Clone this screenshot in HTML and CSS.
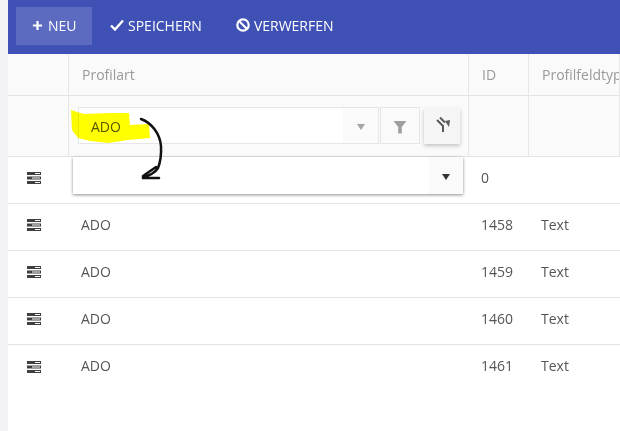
FILE: index.html
```html
<!DOCTYPE html>
<html lang="de">
<head>
<meta charset="utf-8">
<title>Profilfelder</title>
<link rel="stylesheet" href="styles.css">
</head>
<body>
<main class="page">
  <div class="toolbar">
    <button class="tool tool-active"><svg class="ti" viewBox="0 0 12 12"><path d="M6 1v10M1 6h10" stroke="#fff" stroke-width="2.4" fill="none"/></svg>NEU</button>
    <button class="tool"><svg class="ti ti-check" viewBox="0 0 14 12"><path d="M1 6.5l4 4 8-9" stroke="#fff" stroke-width="2.4" fill="none"/></svg>SPEICHERN</button>
    <button class="tool"><svg class="ti ti-ban" viewBox="0 0 14 14"><circle cx="7" cy="7" r="5.7" stroke="#fff" stroke-width="2.2" fill="none"/><path d="M3 3l8 8" stroke="#fff" stroke-width="2.2"/></svg>VERWERFEN</button>
  </div>
  <div class="grid">
    <div class="row head">
      <div class="c c1"></div><div class="c c2">Profilart</div><div class="c c3">ID</div><div class="c c4">Profilfeldtyp</div>
    </div>
    <div class="row filter">
      <div class="c c1"></div>
      <div class="c c2 filter-cell">
        <div class="combo"><span class="combo-text">ADO</span><span class="combo-arrow"><i class="tri tri-grey"></i></span></div>
        <span class="fbtn"><svg class="fi" viewBox="0 0 14 14"><path d="M0.5 1h13L8.8 7v6.5H5.2V7z" fill="#a0a0a0"/></svg></span>
        <span class="clear"><svg class="ci" viewBox="0 0 16 16"><path d="M2 3l6 6v6M5 .5l5 5" stroke="#5a5a5a" stroke-width="2" fill="none"/><path d="M10 4l5-1-1 7z" fill="#5a5a5a"/></svg></span>
      </div>
      <div class="c c3"></div><div class="c c4"></div>
    </div>
    <div class="row"><div class="c c1"><svg class="ri" viewBox="0 0 14 12"><path d="M0 0h14v3H0zM0 4.500h14v3H0zM0 9h14v3H0z" fill="#3f3f3f"/><path d="M8 1h5v1H8zM5 5.500h8v1H5zM8 10h5v1H8z" fill="#fff"/></svg></div><div class="c c2"></div><div class="c c3">0</div><div class="c c4"></div></div>
    <div class="row"><div class="c c1"><svg class="ri" viewBox="0 0 14 12"><path d="M0 0h14v3H0zM0 4.500h14v3H0zM0 9h14v3H0z" fill="#3f3f3f"/><path d="M8 1h5v1H8zM5 5.500h8v1H5zM8 10h5v1H8z" fill="#fff"/></svg></div><div class="c c2">ADO</div><div class="c c3">1458</div><div class="c c4">Text</div></div>
    <div class="row"><div class="c c1"><svg class="ri" viewBox="0 0 14 12"><path d="M0 0h14v3H0zM0 4.500h14v3H0zM0 9h14v3H0z" fill="#3f3f3f"/><path d="M8 1h5v1H8zM5 5.500h8v1H5zM8 10h5v1H8z" fill="#fff"/></svg></div><div class="c c2">ADO</div><div class="c c3">1459</div><div class="c c4">Text</div></div>
    <div class="row"><div class="c c1"><svg class="ri" viewBox="0 0 14 12"><path d="M0 0h14v3H0zM0 4.500h14v3H0zM0 9h14v3H0z" fill="#3f3f3f"/><path d="M8 1h5v1H8zM5 5.500h8v1H5zM8 10h5v1H8z" fill="#fff"/></svg></div><div class="c c2">ADO</div><div class="c c3">1460</div><div class="c c4">Text</div></div>
    <div class="row last"><div class="c c1"><svg class="ri" viewBox="0 0 14 12"><path d="M0 0h14v3H0zM0 4.500h14v3H0zM0 9h14v3H0z" fill="#3f3f3f"/><path d="M8 1h5v1H8zM5 5.500h8v1H5zM8 10h5v1H8z" fill="#fff"/></svg></div><div class="c c2">ADO</div><div class="c c3">1461</div><div class="c c4">Text</div></div>
  </div>
  <div class="editor"><span class="editor-arrow"><i class="tri tri-dark"></i></span></div>
  <svg class="marks marks-hl" viewBox="0 0 620 431">
    <path d="M71 110L77 112L84 114L110 113L129 113L130 125L149 124L150 138L128 140L108 143L90 141L78 138L72 130Z" fill="#ffff00"/>
  </svg>
  <svg class="marks" viewBox="0 0 620 431">
    <path d="M141 119C152 123 160 134 161 146C161.500 156 160 163 158 168C155 173 150 175 142 178L159 178M143 176L156 167" stroke="#111" stroke-width="2.500" fill="none" stroke-linecap="round"/>
  </svg>
</main>
</body>
</html>
```
FILE: styles.css
```css
* { box-sizing: border-box; }
html, body { margin: 0; height: 100%; overflow: hidden; }
body { background: #f3f3f6; font-family: "Open Sans", sans-serif; font-size: 14px; color: #555; }
.page { position: relative; width: 620px; height: 431px; padding-left: 8px; overflow: hidden; }
.toolbar { height: 54px; background: #3f51b5; display: flex; align-items: center; padding: 0 0 2px 8px; }
.tool { height: 38px; border: 0; background: none; color: #fff; font: 14px "Open Sans", sans-serif; padding: 0 16px 2px; display: flex; align-items: center; margin-right: 2px; }
.tool-active { background: #5c6bc0; width: 76px; }
.ti { width: 11px; height: 11px; margin-right: 5px; flex: none; }
.ti-check { width: 14px; height: 12px; margin-right: 4px; }
.ti-ban { width: 14px; height: 14px; margin-right: 4px; }
.grid { background: #fff; height: 377px; }
.row { display: flex; height: 47px; border-bottom: 1px solid #e4e4e4; }
.row.last { border-bottom: 0; }
.row.head { height: 42px; background: #fafafa; color: #999; }
.row.filter { height: 61px; background: #fafafa; }
.c { border-right: 1px solid transparent; display: flex; align-items: center; padding: 0 0 6px 12px; white-space: nowrap; overflow: hidden; }
.head .c { padding: 0 0 0 13px; }
.head .c, .filter .c { border-right-color: #e6e6e6; }
.c1 { width: 61px; padding: 0 0 4px 19px; }
.c2 { width: 400px; }
.c3 { width: 60px; }
.c4 { flex: 1; }
.filter-cell { padding: 0 0 0 9px; overflow: visible; }
.combo { width: 301px; height: 37px; border: 1px solid #e6e6e6; background: #fff; display: flex; align-items: center; justify-content: space-between; padding-left: 12px; color: #555; margin-top: -1px; }
.combo-text { margin-top: 2px; }
.combo-arrow { width: 35px; height: 35px; background: #fafafa; display: flex; align-items: center; justify-content: center; padding-top: 2px; }
.fbtn { width: 40px; height: 37px; margin-left: 1px; margin-top: -1px; border: 1px solid #e6e6e6; background: #fafafa; display: flex; align-items: center; justify-content: center; }
.fi { width: 14px; height: 14px; margin-top: 2px; }
.clear { width: 36px; height: 36px; margin-left: 4px; margin-top: -1px; background: #f5f5f5; box-shadow: 0 2px 4px rgba(0,0,0,.22); display: flex; align-items: center; justify-content: center; padding-left: 2px; }
.ci { width: 16px; height: 16px; margin-top: -2px; }
.tri { display: block; width: 0; height: 0; border-left: 4px solid transparent; border-right: 4px solid transparent; }
.tri-grey { border-top: 6px solid #a3a3a3; }
.tri-dark { border-top: 6px solid #333; margin-top: 3px; }
.ri { width: 14px; height: 12px; }
.editor { position: absolute; left: 73px; top: 157px; width: 390px; height: 37px; background: #fff; box-shadow: 0 1px 3px rgba(0,0,0,.45); display: flex; justify-content: flex-end; }
.editor-arrow { width: 34px; background: #fafafa; display: flex; align-items: center; justify-content: center; }
.marks { position: absolute; left: 0; top: 0; width: 620px; height: 431px; pointer-events: none; }
.marks-hl { mix-blend-mode: multiply; }
```
